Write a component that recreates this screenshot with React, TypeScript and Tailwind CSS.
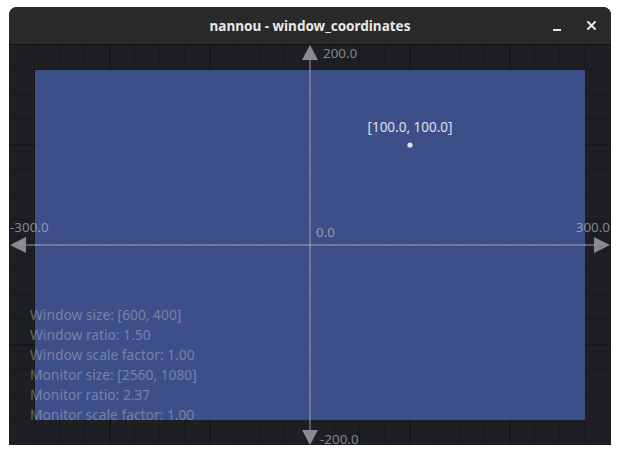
import React from "react";

const W = 600;
const H = 400;

function Grid() {
  const lines: React.ReactNode[] = [];
  for (let x = 25; x < W; x += 25) {
    const major = (x - 300) % 100 === 0;
    if (major) {
      lines.push(<rect key={"vx" + x} x={x - 1} y={0} width={2} height={H} fill="#16171a" />);
    } else {
      lines.push(<rect key={"vx" + x} x={x - 1} y={0} width={1} height={H} fill="#18191c" />);
    }
  }
  for (let y = 25; y < H; y += 25) {
    const major = (y - 200) % 100 === 0;
    if (major) {
      lines.push(<rect key={"hy" + y} x={0} y={y - 1} width={W} height={2} fill="#16171a" />);
    } else {
      lines.push(<rect key={"hy" + y} x={0} y={y - 1} width={W} height={1} fill="#18191c" />);
    }
  }
  return <g>{lines}</g>;
}

const info = [
  "Window size: [600, 400]",
  "Window ratio: 1.50",
  "Window scale factor: 1.00",
  "Monitor size: [2560, 1080]",
  "Monitor ratio: 2.37",
  "Monitor scale factor: 1.00",
];

function Canvas() {
  const font = "'Noto Sans', 'DejaVu Sans', sans-serif";
  const axisText = "rgba(205,205,208,0.6)";
  return (
    <svg width={W} height={H} viewBox={`0 0 ${W} ${H}`} className="block">
      <rect x={0} y={0} width={W} height={H} fill="#1e1f22" />
      <Grid />
      <rect x={25} y={25} width={550} height={350} fill="#3f5391" fillOpacity={0.93} />
      {/* axes */}
      <rect x={299} y={14} width={2} height={372} fill="rgba(165,165,170,0.5)" />
      <rect x={14} y={199} width={572} height={2} fill="rgba(165,165,170,0.5)" />
      <polygon points="300,0 292,15 308,15" fill="#8b8b8d" />
      <polygon points="300,400 292,385 308,385" fill="#8b8b8d" />
      <polygon points="0,200 16,192 16,208" fill="#8b8b8d" />
      <polygon points="600,200 584,192 584,208" fill="#8b8b8d" />
      <g fontFamily={font} fontSize={13.4} fill={axisText}>
        <text x={313} y={13}>200.0</text>
        <text x={310} y={398.5}>-200.0</text>
        <text x={0} y={187}>-300.0</text>
        <text x={600} y={187} textAnchor="end">300.0</text>
        <text x={306} y={192}>0.0</text>
      </g>
      <circle cx={400} cy={100} r={2.6} fill="#dfe3ee" />
      <text x={400} y={87} textAnchor="middle" fontFamily={font} fontSize={13.5} fill="#dde1ec">
        [100.0, 100.0]
      </text>
      <g fontFamily={font} fontSize={13.8} fill="rgba(200,204,215,0.42)">
        {info.map((t, i) => (
          <text key={t} x={20} y={275 + i * 20}>
            {t}
          </text>
        ))}
      </g>
    </svg>
  );
}

export default function App() {
  return (
    <div className="w-[620px] h-[455px] bg-white pt-[7px] pl-[9px]">
      <div className="w-[602px] rounded-t-[8px] bg-[#2a2a2a] overflow-hidden flex flex-col">
        <div className="h-[37px] grid grid-cols-[1fr_auto_1fr] items-center bg-[#2a2a2a]">
          <div />
          <div
            className="text-[13.5px] font-bold text-[#e8e8e8] leading-none pt-[3px]"
            style={{ fontFamily: "'Noto Sans', 'DejaVu Sans', sans-serif" }}
          >
            nannou - window_coordinates
          </div>
          <div className="flex justify-end items-center gap-[26px] pr-[15px]">
            <svg width="8" height="8" viewBox="0 0 8 8" className="block mt-[2px]">
              <rect x="0" y="6" width="8" height="2" fill="#e6e6e6" />
            </svg>
            <svg width="9" height="9" viewBox="0 0 9 9" className="block">
              <path d="M1 1 L8 8 M8 1 L1 8" stroke="#e6e6e6" strokeWidth="2" strokeLinecap="square" />
            </svg>
          </div>
        </div>
        <div className="h-px bg-[#101010]" />
        <div className="px-px bg-[#1a1a1a]">
          <Canvas />
        </div>
      </div>
    </div>
  );
}
